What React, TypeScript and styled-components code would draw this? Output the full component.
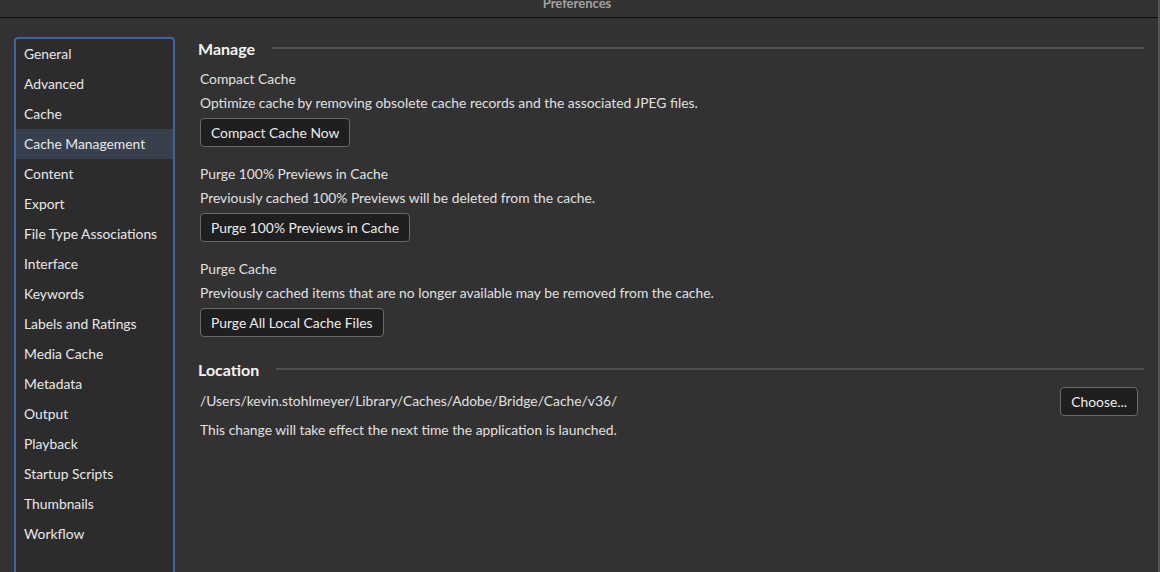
import styled, { createGlobalStyle } from "styled-components";

const GlobalStyle = createGlobalStyle`
  html, body {
    margin: 0;
    padding: 0;
    background: #323232;
  }
  body {
    font-family: Lato, "Open Sans", sans-serif;
    color: #dcdcdc;
  }
`;

const Window = styled.div`
  width: 1160px;
  height: 572px;
  overflow: hidden;
  display: flex;
  flex-direction: column;
  background: #323232;
  box-sizing: border-box;
  border-right: 2px solid #555;
`;

const TitleBar = styled.div`
  height: 17px;
  flex-shrink: 0;
  border-bottom: 1px solid #0e0e0e;
  overflow: hidden;
  text-align: center;
`;

const Title = styled.div`
  margin-top: -3px;
  padding-right: 4px;
  font-size: 13px;
  line-height: 13px;
  font-weight: 700;
  color: #a2a2a2;
`;

const Body = styled.div`
  flex: 1;
  display: flex;
  gap: 23px;
  padding: 18px 14px 0 14px;
`;

const Sidebar = styled.ul`
  list-style: none;
  margin: 1px 0 0 0;
  padding: 0;
  width: 157px;
  height: 600px;
  flex-shrink: 0;
  border: 2px solid #3b66a2;
  border-radius: 4px;
  background: #2c2c2c;
`;

const NavItem = styled.li<{ $active?: boolean }>`
  height: 30px;
  line-height: 30px;
  padding-left: 8px;
  font-size: 13.85px;
  color: #e8e8e8;
  background: ${(p) => (p.$active ? "#37404c" : "transparent")};
`;

const Main = styled.div`
  flex: 1;
  display: flex;
  flex-direction: column;
`;

const SectionHeader = styled.div<{ $after: number }>`
  display: flex;
  align-items: center;
  gap: 17px;
  height: 24px;
  margin-bottom: ${(p) => p.$after}px;
`;

const SectionTitle = styled.span`
  font-size: 16px;
  font-weight: 700;
  color: #f2f2f2;
`;

const Rule = styled.div`
  flex: 1;
  height: 2px;
  background: #4e4e4e;
`;

const Group = styled.div`
  display: flex;
  flex-direction: column;
  align-items: flex-start;
  padding-left: 2px;
  margin-bottom: 15px;
`;

const Label = styled.div`
  font-size: 13.85px;
  line-height: 24px;
  color: #e0e0e0;
`;

const Note = styled(Label)`
  padding-left: 2px;
  margin-top: 2px;
`;

const Button = styled.button<{ $flush?: boolean }>`
  font-family: inherit;
  font-size: 13.85px;
  color: #ececec;
  height: 29px;
  padding: 0 10px;
  margin-top: ${(p) => (p.$flush ? 0 : 3)}px;
  background: #1f1f1f;
  border: 1px solid #6a6a6a;
  border-radius: 4px;
`;

const PathRow = styled.div`
  display: flex;
  align-items: center;
  justify-content: space-between;
  height: 30px;
  padding: 0 6px 0 2px;
`;

const LocationSection = styled.div`
  margin-top: 5px;
`;

const navItems = [
  "General",
  "Advanced",
  "Cache",
  "Cache Management",
  "Content",
  "Export",
  "File Type Associations",
  "Interface",
  "Keywords",
  "Labels and Ratings",
  "Media Cache",
  "Metadata",
  "Output",
  "Playback",
  "Startup Scripts",
  "Thumbnails",
  "Workflow",
];

const groups = [
  {
    label: "Compact Cache",
    desc: "Optimize cache by removing obsolete cache records and the associated JPEG files.",
    button: "Compact Cache Now",
  },
  {
    label: "Purge 100% Previews in Cache",
    desc: "Previously cached 100% Previews will be deleted from the cache.",
    button: "Purge 100% Previews in Cache",
  },
  {
    label: "Purge Cache",
    desc: "Previously cached items that are no longer available may be removed from the cache.",
    button: "Purge All Local Cache Files",
  },
];

export default function App() {
  return (
    <>
      <GlobalStyle />
      <Window>
        <TitleBar>
          <Title>Preferences</Title>
        </TitleBar>
        <Body>
          <Sidebar>
            {navItems.map((n) => (
              <NavItem key={n} $active={n === "Cache Management"}>
                {n}
              </NavItem>
            ))}
          </Sidebar>
          <Main>
            <SectionHeader $after={7}>
              <SectionTitle>Manage</SectionTitle>
              <Rule />
            </SectionHeader>
            {groups.map((g) => (
              <Group key={g.label}>
                <Label>{g.label}</Label>
                <Label>{g.desc}</Label>
                <Button>{g.button}</Button>
              </Group>
            ))}
            <LocationSection>
              <SectionHeader $after={5}>
                <SectionTitle>Location</SectionTitle>
                <Rule />
              </SectionHeader>
              <PathRow>
                <Label>/Users/kevin.stohlmeyer/Library/Caches/Adobe/Bridge/Cache/v36/</Label>
                <Button $flush>Choose...</Button>
              </PathRow>
              <Note>This change will take effect the next time the application is launched.</Note>
            </LocationSection>
          </Main>
        </Body>
      </Window>
    </>
  );
}
